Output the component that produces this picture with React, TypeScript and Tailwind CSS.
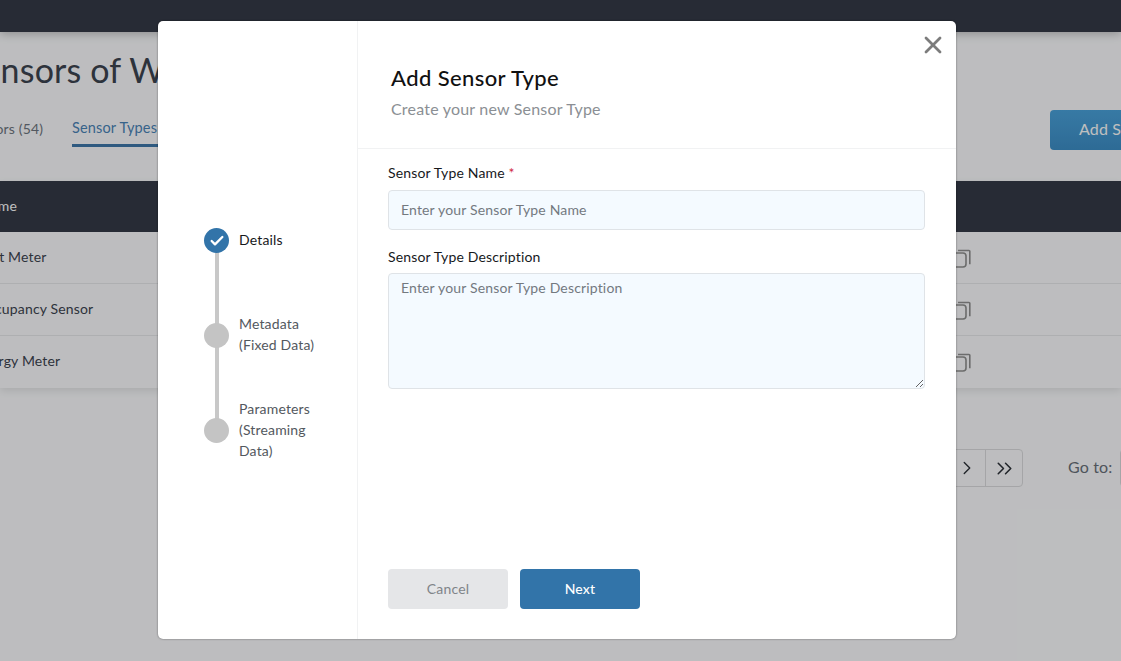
import { Check, ChevronRight, ChevronsRight, X } from "lucide-react";

const rows = [
   { name: "Light Meter", offset: "ml-[-27px]" },
   { name: "Occupancy Sensor", offset: "ml-[-23px]" },
   { name: "Energy Meter", offset: "ml-[-25px]" },
];
const steps = [
   { label: ["Details"], active: true, nudge: "mb-[3px]" },
   { label: ["Metadata", "(Fixed Data)"], active: false, nudge: "mb-[4px]" },
   { label: ["Parameters", "(Streaming", "Data)"], active: false, nudge: "mb-[2px]" },
];

const CopyIcon = () => (
   <svg viewBox="0 0 22 20" fill="none" stroke="#909090" strokeWidth="1.6" className="absolute left-[950px] top-[17px] h-5 w-[22px]">
      <rect x="1" y="4" width="15" height="14" rx="3" />
      <path d="M8 1.5h11a.8.8 0 0 1 .8.8v13" />
   </svg>
);

const Page = () => (
   <div className="flex h-full flex-col bg-[#fcfdff]">
      <div className="h-8 shrink-0 bg-[#343a47] shadow-[0_2px_10px_rgba(0,0,0,0.25)]" />
      <div className="flex h-[149px] shrink-0 flex-col">
         <h1 className="ml-[-36px] mt-4 whitespace-nowrap text-[34px] leading-[44px] text-[#3c4450]">Sensors of Workspace</h1>
         <div className="relative mt-[19px] flex h-[36px] items-start">
            <span className="ml-[-34px] mt-2 w-[106px] whitespace-nowrap text-sm leading-5 text-[#6f7680]">Sensors (54)</span>
            <span className="h-[36px] whitespace-nowrap border-b-[3px] border-[#3f78ab] pt-[7px] text-[14.5px] leading-5 text-[#4a84b8]">Sensor Types (3)</span>
            <button className="absolute left-[1050px] top-[-1px] h-10 w-[140px] whitespace-nowrap rounded-[4px] bg-gradient-to-b from-[#4aa3dc] to-[#3d8fc8] pb-[2px] pl-[29px] text-left text-base text-white">Add Sensor</button>
         </div>
      </div>
      <div className="shadow-[0_3px_8px_rgba(0,0,0,0.1)]">
         <div className="flex h-[51px] items-center bg-[#343a47] pb-[2px] text-sm text-white">
            <span className="ml-[-20px]">Name</span>
         </div>
         {rows.map((row, i) => (
            <div key={row.name} className={`relative flex h-[52px] items-center border-[#e9eaec] pb-[2px] text-sm text-[#3c4450] ${i < 2 ? "border-b" : ""}`}>
               <span className={row.offset}>{row.name}</span>
               <CopyIcon />
            </div>
         ))}
      </div>
      <div className="mt-[61px] flex items-center pl-[910px] text-[#2c3138]">
         <div className="flex h-[38px] shrink-0 items-center rounded-r-[4px] border border-[#dcdddf]">
            <span className="flex h-full w-[75px] items-center justify-end border-r border-[#dcdddf] pr-[7px]">
               <ChevronRight className="h-[22px] w-[22px]" strokeWidth={1.5} />
            </span>
            <span className="flex h-full w-[36px] items-center justify-center">
               <ChevronsRight className="h-[25px] w-[25px] shrink-0" strokeWidth={1.5} />
            </span>
         </div>
         <span className="mb-[2px] ml-[45px] shrink-0 whitespace-nowrap text-base text-[#6a707a]">Go to:</span>
         <span className="ml-[7px] h-[38px] w-12 shrink-0 rounded-[4px] border border-[#dcdddf]" />
      </div>
   </div>
);

const Stepper = () => (
   <div className="relative w-[200px] shrink-0 border-r border-[#f1f2f3] pl-[46px] pt-[172px]">
      <div className="absolute left-[57px] top-[225px] h-[180px] w-1 bg-[#c8c8c8]" />
      {steps.map((step) => (
         <div key={step.label[0]} className="relative flex h-[95px] items-center gap-[10px]">
            <span className={`flex h-[25px] w-[25px] shrink-0 items-center justify-center rounded-full ${step.active ? "bg-[#3274a9]" : "bg-[#c4c4c4]"}`}>
               {step.active && <Check className="h-4 w-4 text-white" strokeWidth={3.5} />}
            </span>
            <div className={`text-sm leading-[21px] ${step.nudge} ${step.active ? "text-[#17191c]" : "text-[#53585e]"}`}>
               {step.label.map((line) => <div key={line}>{line}</div>)}
            </div>
         </div>
      ))}
   </div>
);

const Modal = () => (
   <div className="absolute left-[158px] top-[21px] flex h-[618px] w-[798px] overflow-hidden rounded-[5px] bg-white shadow-[0_0_2px_rgba(0,0,0,0.5)]">
      <Stepper />
      <div className="relative flex min-w-0 flex-1 flex-col">
         <button className="absolute right-[9px] top-[10px] text-[#7c7c7c]">
            <X className="h-7 w-7" strokeWidth={2.4} />
         </button>
         <div className="h-[128px] shrink-0 border-b border-[#f1f2f3] pl-[33px] pt-[42px]">
            <h2 className="text-[22px] font-medium leading-[30px] tracking-[0.4px] text-[#111]">Add Sensor Type</h2>
            <p className="mt-1 text-base leading-[24px] tracking-[0.2px] text-[#8b8f94]">Create your new Sensor Type</p>
         </div>
         <form className="flex flex-1 flex-col pl-[30px] pr-[31px]">
            <label className="mt-[13px] block text-sm leading-[21px] text-[#17191c]">
               Sensor Type Name <span className="text-[#d0273f]">*</span>
            </label>
            <input placeholder="Enter your Sensor Type Name" className="mt-[7px] h-10 w-full rounded-[4px] border border-[#dfe3e7] bg-[#f4faff] px-3 pb-[2px] text-sm text-[#17191c] outline-none placeholder:text-[#73797f]" />
            <label className="mt-4 block text-sm leading-[21px] text-[#17191c]">Sensor Type Description</label>
            <textarea placeholder="Enter your Sensor Type Description" className="mt-[6px] h-[116px] w-full rounded-[4px] border border-[#dfe3e7] bg-[#f4faff] px-3 py-1 text-sm text-[#17191c] outline-none placeholder:text-[#73797f]" />
            <div className="mt-[180px] flex gap-3">
               <button type="button" className="h-10 w-[120px] rounded-[4px] bg-[#e5e6e8] text-sm text-[#808488]">Cancel</button>
               <button type="button" className="h-10 w-[120px] rounded-[4px] bg-[#3274a9] text-sm font-medium text-white">Next</button>
            </div>
         </form>
      </div>
   </div>
);

export default function App() {
   return (
      <div className="relative h-[661px] w-[1121px] overflow-hidden font-['Lato','Noto_Sans',sans-serif] tracking-[0.01em]">
         <Page />
         <div className="absolute inset-0 bg-black/25" />
         <Modal />
      </div>
   );
}
